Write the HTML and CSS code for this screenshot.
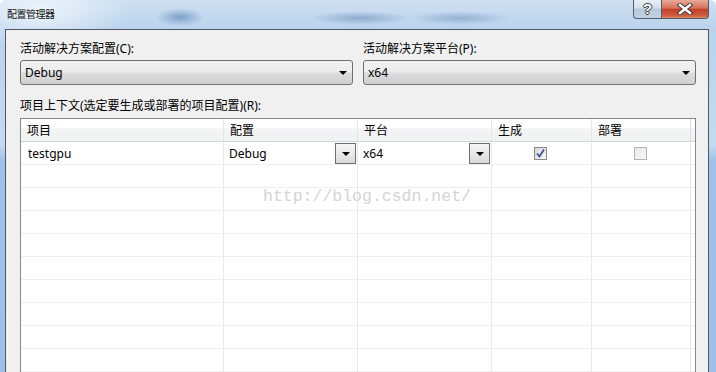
FILE: index.html
```html
<!DOCTYPE html>
<html>
<head>
<meta charset="utf-8">
<title>配置管理器</title>
<link rel="stylesheet" href="styles.css">
</head>
<body>
<div class="window">
  <div class="titlebar">
    <span class="title">配置管理器</span>
    <div class="caption">
      <div class="cap_btn help">?</div>
      <div class="cap_btn close">
        <svg width="16" height="12" viewBox="0 0 16 12">
          <path d="M3 2 L13 10 M13 2 L3 10" stroke="#3b3b3b" stroke-width="4.4" stroke-linecap="square"/>
          <path d="M3 2 L13 10 M13 2 L3 10" stroke="#ffffff" stroke-width="2.4" stroke-linecap="square"/>
        </svg>
      </div>
    </div>
  </div>

  <div class="client">
    <div class="selectors">
      <div class="field">
        <div class="label">活动解决方案配置(C):</div>
        <div class="combo"><span>Debug</span><span class="arrow"></span></div>
      </div>
      <div class="field">
        <div class="label">活动解决方案平台(P):</div>
        <div class="combo"><span>x64</span><span class="arrow"></span></div>
      </div>
    </div>

    <div class="label ctx_label">项目上下文(选定要生成或部署的项目配置)(R):</div>

    <div class="grid">
      <div class="row head">
        <div class="cell">项目</div>
        <div class="cell">配置</div>
        <div class="cell">平台</div>
        <div class="cell">生成</div>
        <div class="cell">部署</div>
        <div class="cell"></div>
      </div>
      <div class="row">
        <div class="cell">testgpu</div>
        <div class="cell drop">Debug<span class="cell_btn"><span class="arrow"></span></span></div>
        <div class="cell drop">x64<span class="cell_btn"><span class="arrow"></span></span></div>
        <div class="cell check_cell"><span class="chk checked">
          <svg width="11" height="11" viewBox="0 0 11 11"><path d="M2 5.5 L4.5 8.5 L9 1.5" fill="none" stroke="#3d52a0" stroke-width="1.8"/></svg>
        </span></div>
        <div class="cell check_cell"><span class="chk off"></span></div>
        <div class="cell"></div>
      </div>
      <div class="row"><div class="cell"></div><div class="cell"></div><div class="cell"></div><div class="cell"></div><div class="cell"></div><div class="cell"></div></div>
      <div class="row"><div class="cell"></div><div class="cell"></div><div class="cell"></div><div class="cell"></div><div class="cell"></div><div class="cell"></div></div>
      <div class="row"><div class="cell"></div><div class="cell"></div><div class="cell"></div><div class="cell"></div><div class="cell"></div><div class="cell"></div></div>
      <div class="row"><div class="cell"></div><div class="cell"></div><div class="cell"></div><div class="cell"></div><div class="cell"></div><div class="cell"></div></div>
      <div class="row"><div class="cell"></div><div class="cell"></div><div class="cell"></div><div class="cell"></div><div class="cell"></div><div class="cell"></div></div>
      <div class="row"><div class="cell"></div><div class="cell"></div><div class="cell"></div><div class="cell"></div><div class="cell"></div><div class="cell"></div></div>
      <div class="row"><div class="cell"></div><div class="cell"></div><div class="cell"></div><div class="cell"></div><div class="cell"></div><div class="cell"></div></div>
      <div class="row"><div class="cell"></div><div class="cell"></div><div class="cell"></div><div class="cell"></div><div class="cell"></div><div class="cell"></div></div>
      <div class="row"><div class="cell"></div><div class="cell"></div><div class="cell"></div><div class="cell"></div><div class="cell"></div><div class="cell"></div></div>

      <div class="watermark">http://blog.csdn.net/</div>
    </div>
  </div>
</div>
</body>
</html>
```

FILE: styles.css
```css
html, body {
    margin: 0;
    padding: 0;
    background: #ffffff;
}

.window {
    width: 716px;
    height: 372px;
    overflow: hidden;
    box-sizing: border-box;
    padding: 0 7px 0 5px;
    border-radius: 6px 6px 0 0;
    font-family: "Noto Sans", "Noto Sans CJK SC", sans-serif;
    font-size: 12px;
    color: #000;
    background:
        radial-gradient(ellipse 24px 9px at 180px 17px, rgba(70,115,170,0.55), rgba(70,115,170,0) 100%),
        radial-gradient(ellipse 50px 7px at 360px 18px, rgba(80,120,170,0.45), rgba(80,120,170,0) 100%),
        radial-gradient(ellipse 50px 7px at 460px 18px, rgba(80,120,170,0.40), rgba(80,120,170,0) 100%),
        radial-gradient(ellipse 90px 40px at 40px 10px, rgba(240,246,252,0.9), rgba(240,246,252,0) 100%),
        linear-gradient(to right, rgba(255,255,255,0) 0, rgba(255,255,255,0) 5px, rgba(255,255,255,0) 709px),
        linear-gradient(to bottom, #cfe0f2 0, #b9d2ec 30px, #c6daf0 145px, #9fc3e8 160px, #9cc0e6 100%);
}

.titlebar {
    height: 29px;
    display: flex;
    justify-content: space-between;
    align-items: flex-start;
}

.title {
    margin: 7px 0 0 2px;
    font-family: "Noto Sans CJK SC", sans-serif;
    font-size: 10px;
    line-height: 14px;
    letter-spacing: -0.5px;
    color: #111;
}

.caption {
    display: flex;
}

.cap_btn {
    height: 19px;
    box-sizing: border-box;
    border: 1px solid #4f5e70;
    border-top: none;
    display: flex;
    align-items: center;
    justify-content: center;
}

.help {
    width: 28px;
    border-right: none;
    border-radius: 0 0 0 4px;
    background: linear-gradient(to bottom, #e7eef6 0, #d3dfeb 45%, #b7c8da 50%, #c3d3e4 100%);
    color: #fff;
    font-family: "Liberation Sans", sans-serif;
    font-weight: bold;
    font-size: 15px;
    line-height: 18px;
    text-shadow: 1px 0 0 #3a3a3a, -1px 0 0 #3a3a3a, 0 1px 0 #3a3a3a, 0 -1px 0 #3a3a3a;
}

.close {
    width: 48px;
    border-radius: 0 0 4px 0;
    background: linear-gradient(to bottom, #e9a99b 0, #d8705c 45%, #c3402a 52%, #d05a3c 85%, #e08a60 100%);
}

.client {
    height: 343px;
    box-sizing: border-box;
    border: 1px solid #4e5864;
    border-bottom: none;
    background: #f0f0f0;
    padding: 11px 0 0 14px;
}

.label {
    line-height: 16px;
    height: 16px;
    white-space: nowrap;
}

.selectors {
    display: flex;
    gap: 10px;
    width: 676px;
}

.field {
    flex: 1;
}

.combo {
    margin-top: 3px;
    height: 25px;
    box-sizing: border-box;
    border: 1px solid #707070;
    border-radius: 3px;
    background: linear-gradient(to bottom, #f2f2f2 0, #ebebeb 48%, #dddddd 52%, #cfcfcf 100%);
    display: flex;
    align-items: center;
    justify-content: space-between;
    padding: 0 5px 0 4px;
}

.arrow {
    width: 0;
    height: 0;
    border-left: 4px solid transparent;
    border-right: 4px solid transparent;
    border-top: 4px solid #000;
}

.ctx_label {
    margin-top: 13px;
}

.grid {
    position: relative;
    margin-top: 4px;
    width: 676px;
    box-sizing: border-box;
    border: 1px solid #828790;
    background: #ffffff;
}

.row {
    display: grid;
    grid-template-columns: 203px 134px 134px 100px 99px 4px;
    height: 23px;
}

.cell {
    border-right: 1px solid #e4eaf2;
    border-bottom: 1px solid #efefef;
    display: flex;
    align-items: center;
    padding-left: 7px;
    white-space: nowrap;
    overflow: hidden;
}

.row .cell:last-child {
    padding: 0;
    border-right: none;
}

.head .cell {
    padding-left: 6px;
    border-right: 1px solid #e6e6e6;
    border-bottom: 1px solid #d5d5d5;
    background: linear-gradient(to bottom, #ffffff 0, #ffffff 40%, #f3f3f4 45%, #f1f2f3 100%);
}

.head .cell:nth-child(5) {
    border-right: 1px solid #dcdcdc;
}

.cell.drop {
    padding-left: 5px;
    justify-content: space-between;
    padding-right: 1px;
}

.cell_btn {
    width: 21px;
    height: 21px;
    box-sizing: border-box;
    border: 1px solid #6f6f6f;
    background: linear-gradient(to bottom, #f6f6f6 0, #e9e9e9 50%, #d9d9d9 100%);
    display: flex;
    align-items: center;
    justify-content: center;
    margin-top: 1px;
}

.check_cell {
    padding: 0;
    justify-content: center;
}

.chk {
    width: 13px;
    height: 13px;
    box-sizing: border-box;
    display: flex;
    align-items: center;
    justify-content: center;
    margin-right: 2px;
}

.chk.checked {
    border: 1px solid #8a8a8a;
    background: linear-gradient(to bottom right, #d6d6d6 0, #ececec 60%, #f6f6f6 100%);
}

.chk.off {
    border: 1px solid #b3b3b3;
    background: linear-gradient(to bottom right, #e9e9e9 0, #f7f7f7 100%);
}

.watermark {
    position: absolute;
    left: 242px;
    top: 68px;
    font-family: "Liberation Mono", monospace;
    font-size: 16.5px;
    color: #d4d4d4;
    white-space: nowrap;
}
```
